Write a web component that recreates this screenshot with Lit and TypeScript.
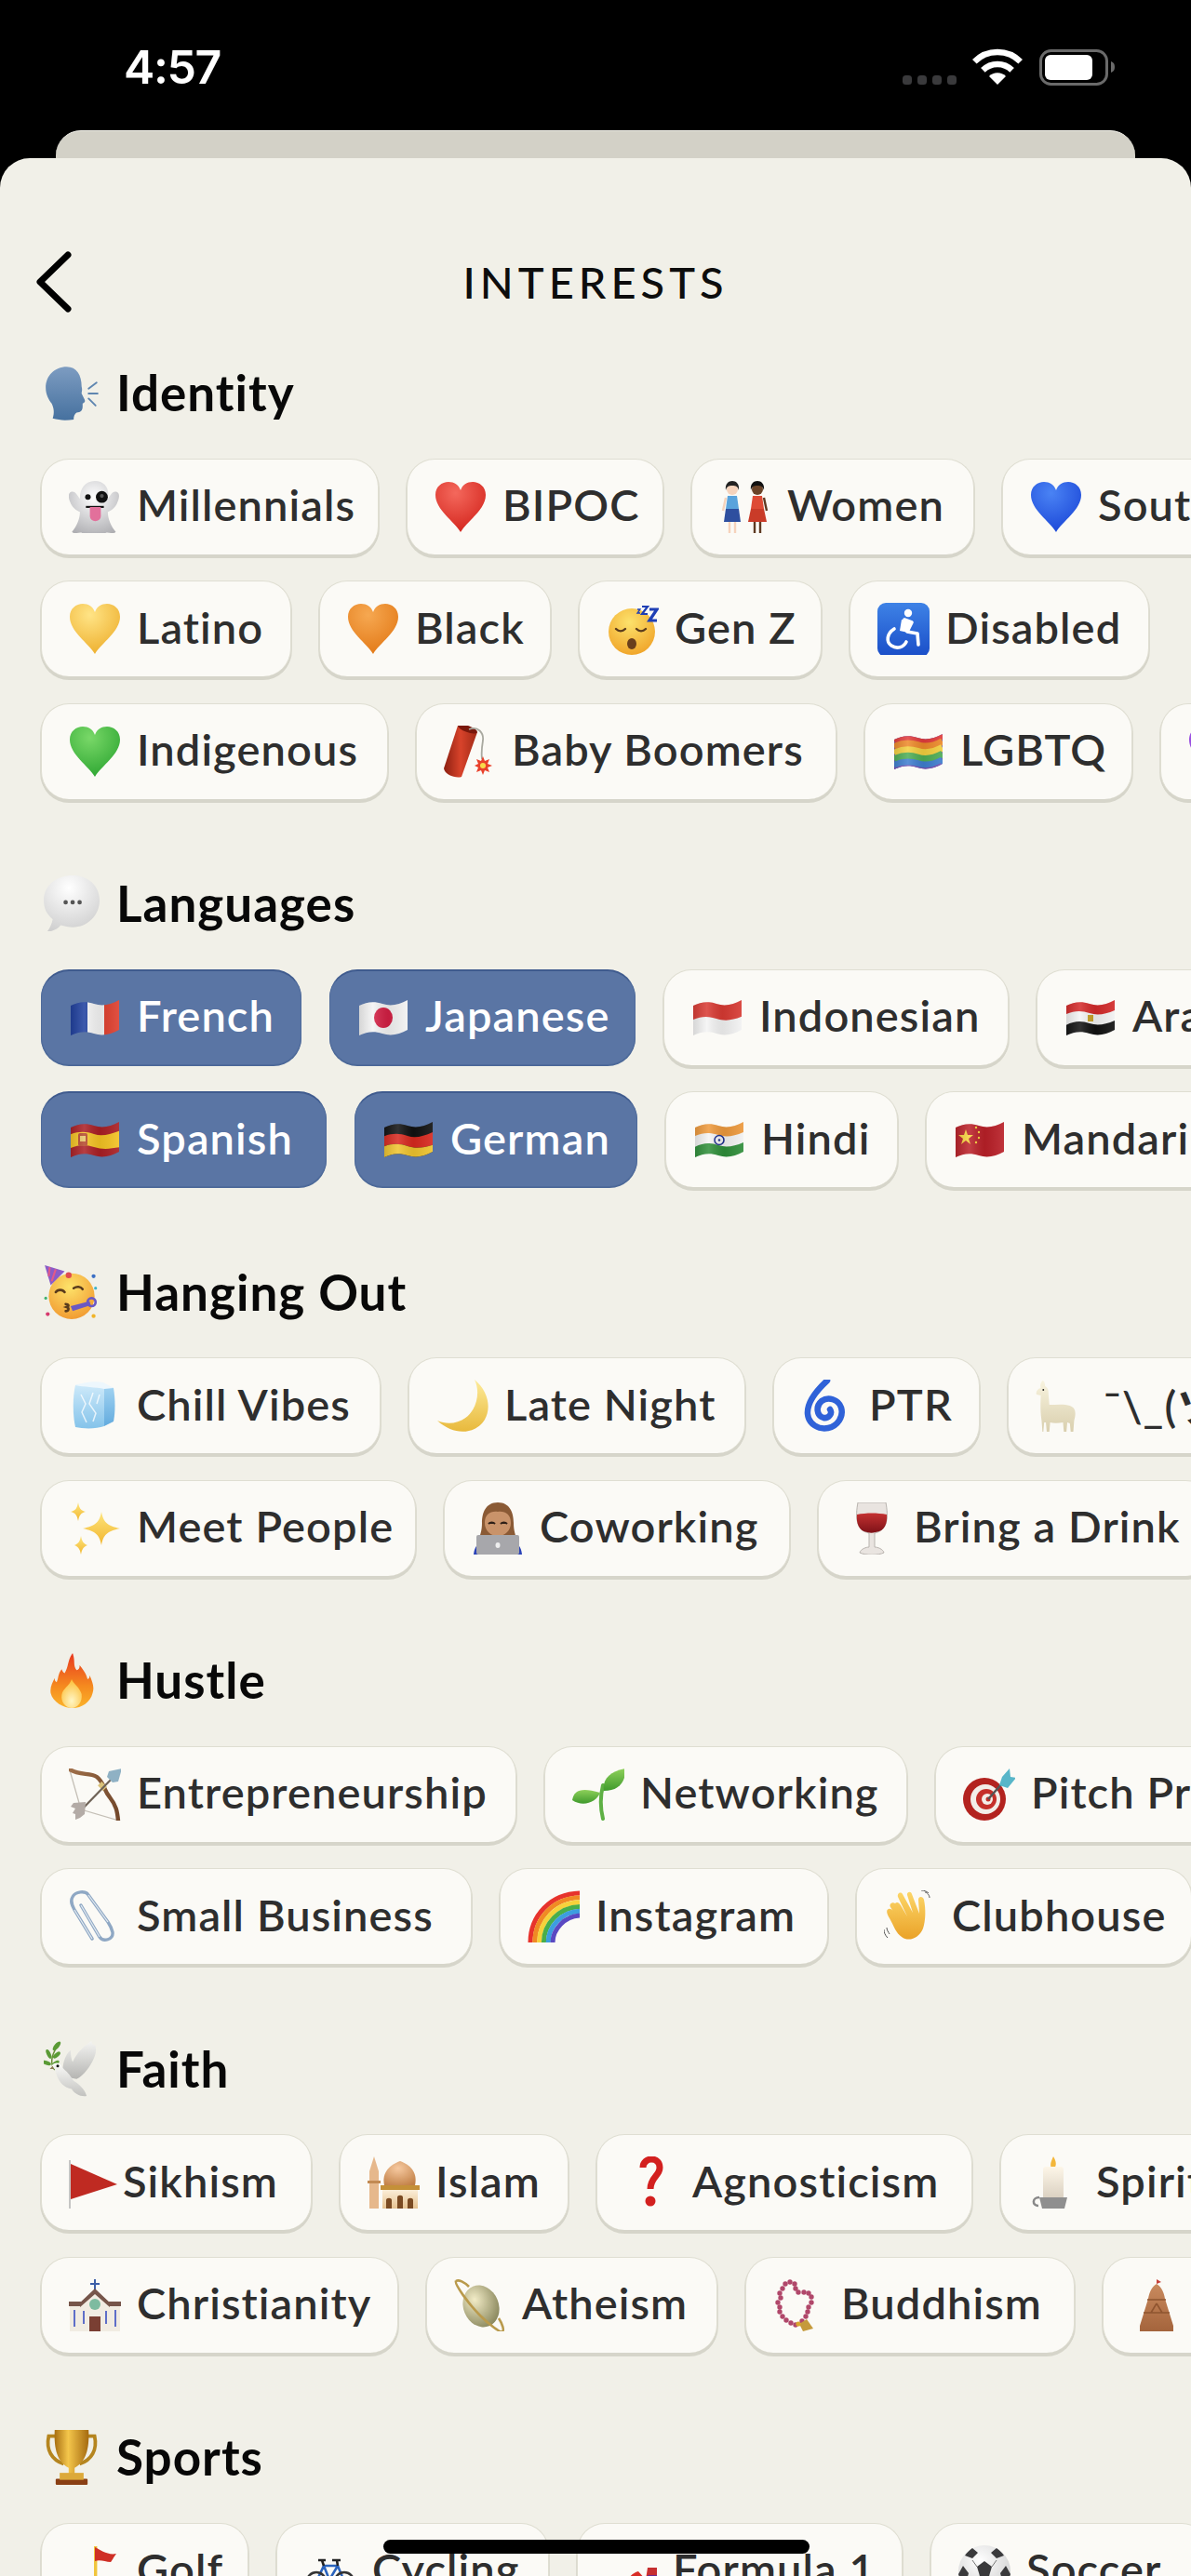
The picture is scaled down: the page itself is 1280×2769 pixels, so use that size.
import { LitElement, html, css, svg } from "lit";
import { customElement } from "lit/decorators.js";

const lin = (id: string, a: string, b: string, h = false) => svg`<linearGradient id=${id} x1="0" y1="0" x2=${h ? 1 : 0} y2=${h ? 0 : 1}><stop offset="0" stop-color=${a}/><stop offset="1" stop-color=${b}/></linearGradient>`;
const rad = (id: string, a: string, b: string, cx = 0.38, cy = 0.3) => svg`<radialGradient id=${id} cx=${cx} cy=${cy} r="0.8"><stop offset="0" stop-color=${a}/><stop offset="1" stop-color=${b}/></radialGradient>`;

const heart = (id: string, a: string, b: string) => svg`<defs>${rad(id, a, b, 0.4, 0.22)}</defs><path fill="url(#${id})" d="M28 55C21 43 1 31 1 15 1 6 8 1 15 1c6 0 11 3 13 9 2-6 7-9 13-9 7 0 14 5 14 14 0 16-20 28-27 40Z"/>`;

const WAVE = "M2 15C10 11 18 10 27 13S45 14 54 9V41C45 46 36 48 27 45S10 43 2 47Z";
const flag = (id: string, body: unknown) => svg`<defs><clipPath id=${id}><path d=${WAVE}/></clipPath><linearGradient id="${id}g" x1="0" y1="0" x2="1" y2="0"><stop offset="0" stop-color="#000" stop-opacity=".14"/><stop offset=".3" stop-color="#fff" stop-opacity=".14"/><stop offset=".6" stop-color="#000" stop-opacity=".08"/><stop offset="1" stop-color="#fff" stop-opacity=".1"/></linearGradient></defs><g clip-path="url(#${id})">${body}<rect x="0" y="0" width="56" height="56" fill="url(#${id}g)"/></g>`;
const hbands = (cols: string[]) => {
  const h = 40 / cols.length;
  return cols.map((c, i) => svg`<path fill="none" stroke=${c} stroke-width=${h + 1} d="M2 ${11 + 2 + h * (i + 0.5)}C10 ${9 + h * (i + 0.5)} 18 ${8 + h * (i + 0.5)} 27 ${11 + h * (i + 0.5)}S45 ${12 + h * (i + 0.5)} 54 ${7 + h * (i + 0.5)}"/>`);
};

const ICONS: Record<string, unknown> = {
  speak: svg`<defs>${lin("sp", "#7d9cc1", "#46719f")}</defs><path fill="url(#sp)" d="M23 2C11 2 2 11 2 23c0 7 3 12 6 16 2 4 3 9 1 15 7 2 14 2 21 1 0-3 1-6 3-7 4 0 6-2 6-6v-3c2-1 3-2 2-4l-3-6c0-2 1-3 0-7C38 10 33 2 23 2Z"/><path stroke="#5f86b0" stroke-width="1.8" fill="none" stroke-linecap="round" d="M45 24l8-6M45 29h9M45 34l7 7"/>`,
  speech: svg`<defs>${rad("sb", "#ffffff", "#cfcfcf", 0.45, 0.22)}</defs><path fill="url(#sb)" d="M29 0C13 0 0 10 0 25c0 8 3 14 9 19-1 5-3 9-6 13 6-1 11-3 14-7 4 1 8 2 12 2 15 0 27-12 27-27S44 0 29 0Z"/><g fill="#555"><circle cx="22" cy="27" r="2.2"/><circle cx="29" cy="27" r="2.2"/><circle cx="36" cy="27" r="2.2"/></g>`,
  party: svg`<defs>${rad("pf", "#fde36a", "#f0932b", 0.45, 0.3)}</defs><circle cx="28" cy="32" r="23" fill="url(#pf)"/><path fill="#8a5cc7" d="M1 1l20 6-14 14Z"/><path stroke="#e05a8a" stroke-width="2" d="M6 3l-1 9M12 5l-4 12"/><circle cx="25" cy="11" r="3" fill="#e04a50"/><g fill="none" stroke="#5a3b1c" stroke-width="2.4" stroke-linecap="round"><path d="M12 28c2-3 7-3 9 0M30 24c3-2 7-2 9 1"/><path d="M22 40c3 0 4 2 1 3 3 1 2 4-1 4"/></g><path fill="#6a58c4" d="M27 42l19-5 1 4-18 6Z"/><circle cx="48" cy="38" r="4" fill="none" stroke="#6a58c4" stroke-width="2.5"/><circle cx="50" cy="12" r="2" fill="#3b6fc4"/><circle cx="52" cy="24" r="1.5" fill="#3fb3c8"/><circle cx="4" cy="50" r="2" fill="#d63a6e"/><circle cx="2" cy="34" r="1.5" fill="#3fb36e"/><circle cx="50" cy="52" r="2" fill="#f0b429"/>`,
  fire: svg`<defs><linearGradient id="fr" x1="0" y1="0" x2="0" y2="1"><stop offset="0" stop-color="#e8391f"/><stop offset=".6" stop-color="#f58a1f"/><stop offset="1" stop-color="#fbb32a"/></linearGradient>${rad("fi", "#fff6c4", "#fcb92b", 0.5, 0.75)}</defs><path fill="url(#fr)" d="M29 1c3 8 0 12 4 17 3-1 3-3 3-5 5 6 7 10 8 14 2-1 2-2 2-4 3 7 5 12 3 18-2 9-11 15-20 15S9 50 7 41c-1-6 2-11 4-15 0 2 0 3 2 4 2-4 1-8 5-13 1 2 1 3 3 4C25 15 24 7 29 1Z"/><path fill="url(#fi)" d="M28 27c2 5 8 8 10 15 1 8-4 14-10 14s-11-6-10-13c1-7 8-9 10-16Z"/>`,
  dove: svg`<defs>${lin("dv", "#fbfbf9", "#c2c2bf")}${lin("dw", "#f4f4f2", "#b5b5b2")}</defs><path stroke="#6c8f3b" stroke-width="1.4" fill="none" d="M11 29C7 24 7 16 13 6"/><g fill="#5a9a35"><ellipse cx="13" cy="5" rx="2.4" ry="5.5" transform="rotate(40 13 5)"/><ellipse cx="5" cy="13" rx="2" ry="5" transform="rotate(-25 5 13)"/><ellipse cx="13" cy="14" rx="2" ry="4.5" transform="rotate(50 13 14)"/><ellipse cx="3" cy="22" rx="2" ry="4.5" transform="rotate(-70 3 22)"/><ellipse cx="12" cy="22" rx="1.8" ry="4" transform="rotate(60 12 22)"/></g><path fill="url(#dw)" d="M19 30C19 20 23 12 27 9c0 6 1 10 2 12C33 12 40 5 48 0c0 3 2 3 4 5 1 5 0 9-2 13-3 7-10 17-17 20-7-1-12-4-14-8Z"/><path fill="url(#dv)" d="M8 25c2-4 8-4 10 0 1 3 5 5 8 9l4 6c5 3 11 8 13 15-6 1-12-2-15-7-7-1-13-7-15-14-1-3-1-6-5-9Z"/><circle cx="14" cy="25" r="1.4" fill="#111"/><path fill="#8a7a55" d="M9 25l-3 3 4 0Z"/>`,
  trophy: svg`<defs><linearGradient id="tr" x1="0" y1="0" x2="1" y2="0"><stop offset="0" stop-color="#a86f12"/><stop offset=".4" stop-color="#f4c64b"/><stop offset="1" stop-color="#a56a10"/></linearGradient></defs><path fill="none" stroke="#b5851f" stroke-width="3.5" d="M13 7H5c-3 14 3 24 15 28M43 7h8c3 14-3 24-15 28"/><path fill="url(#tr)" d="M11 1h34c1 20-3 32-14 38v9h-6v-9C14 33 10 21 11 1Z"/><rect x="12" y="50" width="32" height="6" rx="1" fill="#8a3f14"/><rect x="16" y="44" width="24" height="7" fill="#dca93a"/>`,
  ghost: svg`<defs>${rad("gh", "#ffffff", "#a9a9ad", 0.5, 0.3)}</defs><g transform="translate(-2 -1) scale(1.07)"><path fill="url(#gh)" d="M28 1C18 1 13 9 13 18v1C11 16 8 10 4 12 0 14 2 20 4 24c2 4 6 7 9 8 0 7-3 14-8 20 3 3 7 0 10 1 3 2 6 3 8 1 3-1 5-1 8 0 3 2 6 1 8-1 3-1 7 2 10-1-5-6-8-13-8-20 3-1 7-4 9-8 2-4 4-10 0-12-4-2-7 4-9 7v-1C43 9 38 1 28 1Z"/><circle cx="21" cy="17" r="2.8" fill="#111"/><circle cx="35" cy="17" r="6" fill="#111"/><circle cx="35" cy="16" r="2" fill="#555"/><path stroke="#111" stroke-width="2" d="M19 27h18" fill="none"/><path fill="#e2709b" d="M23 27h11v9c0 7-11 7-11 0Z"/></g>`,
  red: heart("hr", "#f4685c", "#d4261e"),
  blue: heart("hb", "#4a83f4", "#1c48d8"),
  yellow: heart("hy", "#ffe486", "#eeb02f"),
  orange: heart("ho", "#f6a851", "#e37a18"),
  green: heart("hg", "#79d868", "#2fa733"),
  purple: heart("hp", "#b76ef0", "#7a2fd0"),
  women: svg`<circle cx="14" cy="9" r="6" fill="#f6d3bc"/><path fill="#222" d="M7 10C6 3 10 0 14 0s8 3 7 10c-1-4-3-5-7-5s-6 1-7 5Z"/><path fill="#5aa3dc" d="M9 16h10l2 14H7Z"/><path fill="#2e4f9f" d="M7 30h14l2 14H5Z"/><path stroke="#f6d3bc" stroke-width="2.4" d="M7 18l-3 14M11 44v12M17 44v12"/><circle cx="41" cy="9" r="6" fill="#6a4328"/><path fill="#111" d="M34 10C33 3 37 0 41 0s8 3 7 10c-1-4-3-5-7-5s-6 1-7 5Z"/><path fill="#de4b35" d="M36 16h10l2 14-3 14H37l-3-14Z"/><path fill="#c93b28" d="M34 30h14l3 14H31Z"/><path stroke="#5e3a22" stroke-width="2.4" d="M48 18l3 14M38 44v12M44 44v12"/>`,
  sleep: svg`<defs>${rad("sl", "#fce26c", "#ef9e22", 0.45, 0.3)}</defs><circle cx="27" cy="31" r="25" fill="url(#sl)"/><g fill="none" stroke="#5a3b1c" stroke-width="2.4" stroke-linecap="round"><path d="M10 28c3 3 7 3 10 0M32 28c3 3 7 3 10 0"/></g><ellipse cx="27" cy="44" rx="5" ry="6" fill="#6a3f1c"/><g fill="none" stroke="#1f3fb5"><path d="M46 7h8l-8 12h8" stroke-width="3.2"/><path d="M38 4h6l-6 8h6" stroke-width="2.2"/><path d="M33 7h3l-3 4h3" stroke-width="1.3"/></g>`,
  wheel: svg`<defs>${lin("wh", "#3e82e6", "#1a4ec8")}</defs><rect x="0" y="0" width="56" height="58" rx="9" fill="url(#wh)"/><g fill="none" stroke="#fff" stroke-width="3.6" stroke-linecap="round" stroke-linejoin="round"><path d="M29 18l8 3-5 10 11 2 1 12"/><path d="M18 28c-8 5-9 14-3 18 6 4 13 2 16-4"/></g><circle cx="33" cy="11" r="4.2" fill="#fff"/><path fill="#fff" d="M26 18l11 2-4 12-9-2Z"/>`,
  dynamite: svg`<defs><linearGradient id="dy" x1="0" y1="0" x2="1" y2="0"><stop offset="0" stop-color="#8c1f10"/><stop offset=".5" stop-color="#d8432b"/><stop offset="1" stop-color="#a02a16"/></linearGradient></defs><path fill="url(#dy)" d="M15 0l21 7-17 48c-6 2-18-2-19-9Z"/><ellipse cx="25.5" cy="3.5" rx="11" ry="3.5" transform="rotate(20 25.5 3.5)" fill="#7a180c"/><path fill="none" stroke="#a9a9a0" stroke-width="1.8" d="M27 4c10-4 16 4 15 12-1 6-2 12-1 20"/><path fill="#e9412b" d="M42 33l2 5 5-2-2 5 5 2-5 2 2 5-5-2-2 5-2-5-5 2 2-5-4-2 4-2-2-5 5 2Z"/><circle cx="42" cy="43" r="3" fill="#f8d94a"/>`,
  rainbowflag: flag("fr1", svg`<rect width="56" height="56" fill="#6a4fb5"/>${hbands(["#e23c3c", "#ee8a2a", "#f4d03f", "#4fae56", "#3f7fd0", "#7a4fb0"])}`),
  french: flag("f1", svg`<rect x="0" width="20" height="56" fill="#1e3f9e"/><rect x="20" width="18" height="56" fill="#f5f5f5"/><rect x="38" width="18" height="56" fill="#e0402f"/>`),
  japan: flag("f2", svg`<rect width="56" height="56" fill="#f4f4f4"/><ellipse cx="28" cy="28" rx="10" ry="11" fill="#d41f44"/>`),
  indonesia: flag("f3", svg`<rect width="56" height="56" fill="#f4f4f4"/><path fill="#d93a33" d="M0 0H56V26C45 31 36 32 27 29S10 26 0 31Z"/>`),
  egypt: flag("f4", svg`<rect width="56" height="56" fill="#f4f4f4"/><path fill="#d42a2a" d="M0 0H56V19C45 24 36 26 27 23S10 20 0 25Z"/><path fill="#111" d="M0 37C10 31 18 31 27 34S45 35 56 30V56H0Z"/><rect x="25" y="25" width="6" height="7" fill="#c9a227"/>`),
  spain: flag("f5", svg`<rect width="56" height="56" fill="#ab1f24"/><path fill="#f5c423" d="M0 23C10 19 18 19 27 22S45 22 56 18V36C45 38 36 39 27 36S10 33 0 38Z"/><rect x="10" y="21" width="10" height="14" rx="2" fill="#b5472c"/><rect x="12" y="24" width="6" height="6" fill="#e8c56a"/>`),
  germany: flag("f6", svg`<rect width="56" height="56" fill="#111"/><path fill="#d9291f" d="M0 25C10 21 18 21 27 24S45 24 56 19V33C45 37 36 38 27 35S10 32 0 36Z"/><path fill="#f0c52e" d="M0 36C10 32 18 32 27 35S45 37 56 33V56H0Z"/>`),
  india: flag("f7", svg`<rect width="56" height="56" fill="#f4f4f4"/><path fill="#ef9a3c" d="M0 0H56V19C45 24 36 26 27 23S10 20 0 25Z"/><path fill="#2f8f3a" d="M0 37C10 31 18 31 27 34S45 35 56 30V56H0Z"/><circle cx="28" cy="28.5" r="5" fill="none" stroke="#1c2f8f" stroke-width="1.6"/><circle cx="28" cy="28.5" r="1.2" fill="#1c2f8f"/>`),
  china: flag("f8", svg`<rect width="56" height="56" fill="#bb2028"/><path fill="#f6d23c" d="M13 17l2 6 6 0-5 4 2 6-5-4-5 4 2-6-5-4 6 0Z"/><g fill="#f6d23c"><circle cx="24" cy="15" r="1.2"/><circle cx="27" cy="20" r="1.2"/><circle cx="27" cy="26" r="1.2"/><circle cx="24" cy="31" r="1.2"/></g>`),
  ice: svg`<defs>${lin("ic", "#cfeafa", "#84c3ea")}${lin("ic2", "#a3d4f2", "#63abde")}</defs><path fill="url(#ic)" d="M7 6C15 4 28 4 38 6v44c-8 3-22 3-31 1C4 38 4 18 7 6Z"/><path fill="url(#ic2)" d="M38 6l10 3c2 12 2 26 0 36l-10 5Z"/><path fill="#edf7fd" d="M7 6c8-3 21-5 30-3l11 6-10 1C29 8 16 8 7 6Z"/><path stroke="#fff" stroke-width="1.5" stroke-opacity=".75" fill="none" d="M13 16l5 10-4 9 5 11M26 14l-4 12 7 10-3 9M33 16l-3 10"/>`,
  moon: svg`<defs>${lin("mo", "#fdeb9a", "#e8b93c")}</defs><path fill="url(#mo)" d="M41 0C58 14 60 36 48 48 38 58 18 60 1 44c13 6 29 2 37-10 7-10 8-24 3-34Z"/>`,
  spiral: svg`<path fill="none" stroke="#2f62d8" stroke-width="6.5" stroke-linecap="round" d="M28 1C14 14 6 26 7 37c1 11 12 17 22 15s17-12 14-22c-3-9-14-12-21-7-7 6-5 16 2 18 6 1 10-5 7-9"/>`,
  llama: svg`<defs>${lin("ll", "#f8f3de", "#d9cfae")}</defs><g transform="scale(.92 1)"><path fill="url(#ll)" d="M8 1c2 0 3 3 3 6 4 2 4 5 4 8l1 12c8 0 18-1 24 1 6 2 7 6 6 12l-1 4-1 12h-3l-1-9-3-1-1 10h-3l-1-10c-6 1-11 1-15 0l-1 10h-3l-1-10-2 0-1 10H8l-1-12C5 32 6 24 6 17l-5-1c-1-3 1-6 5-7C5 6 6 3 8 1Z"/><circle cx="9" cy="11" r="1" fill="#222"/></g>`,
  sparkle: svg`<defs>${lin("sk", "#fde57e", "#f2b62e")}</defs><g fill="url(#sk)"><path d="M35 10c2 11 6 15 20 18-14 3-18 7-20 18-2-11-6-15-20-18 14-3 18-7 20-18Z"/><path d="M10 0c1 6 3 9 8 10-5 1-7 4-8 10-1-6-3-9-8-10 5-1 7-4 8-10Z"/><path d="M13 36c1 5 2 8 7 10-5 2-6 5-7 10-1-5-2-8-7-10 5-2 6-5 7-10Z"/></g>`,
  coder: svg`<path fill="#8a5a35" d="M28 0C15 0 11 11 11 22c0 8-2 14-4 18h42c-2-4-4-10-4-18C45 11 41 0 28 0Z"/><path fill="#c9936a" d="M14 22c0-9 6-13 14-12 8-1 14 3 14 12 0 8-6 14-14 14S14 30 14 22Z"/><path fill="#2f2018" d="M18 23c2-2 5-2 7 0M31 23c2-2 5-2 7 0" stroke="#2f2018" stroke-width="2"/><path fill="#2b43b8" d="M2 56c1-10 6-16 26-16s25 6 26 16Z"/><rect x="5" y="35" width="46" height="21" rx="2" fill="#a7a7ab"/><ellipse cx="28" cy="46" rx="2.5" ry="3" fill="#eee"/>`,
  wine: svg`<defs>${lin("wn", "#c43131", "#7e1218")}</defs><path fill="#e9e4e0" stroke="#b8b3ae" stroke-width="1" d="M13 0h30c3 16 2 30-12 33v15c3 0 9 2 10 6-6 3-20 3-26 0 1-4 7-6 10-6V33C11 30 10 16 13 0Z"/><path fill="url(#wn)" d="M12 13c10-2 22-2 32 0 1 9-2 18-12 19-3 1-6 1-9 0-9-1-12-10-11-19Z"/>`,
  bow: svg`<defs>${lin("bw", "#a0704a", "#74492c", true)}</defs><path stroke="#c4bfb6" stroke-width="1.3" d="M1 2L13 44 54 56" fill="none"/><path fill="none" stroke="url(#bw)" stroke-width="4.4" stroke-linecap="round" d="M1 1C12 8 22 4 30 9c8 6 7 14 14 22 7 9 8 15 9 25"/><rect x="33" y="15" width="6" height="8" fill="#d9c27a" transform="rotate(-45 36 19)"/><path stroke="#6e6256" stroke-width="2.2" d="M49 8L12 46" fill="none"/><path fill="#8fb1c4" d="M57 0L43 3l-2 6 6 6 6-1Z"/><path fill="#b3aba6" d="M18 36l-13 1-3 4 5 2-3 5 3 1 0 6 5-2 5-4 1-13Z"/>`,
  seedling: svg`<defs>${lin("se", "#8ed05a", "#3f9a2c")}</defs><path stroke="#5eb044" stroke-width="4" fill="none" stroke-linecap="round" d="M33 54C30 42 30 30 33 18"/><path fill="url(#se)" d="M57 0C58 14 50 24 34 24 32 12 40 3 57 0Z"/><path fill="url(#se)" d="M0 34C2 23 10 20 30 26 26 36 12 42 0 34Z"/>`,
  dart: svg`<circle cx="23" cy="33" r="23" fill="#b3231f"/><circle cx="24" cy="33" r="16" fill="#f3eee8"/><circle cx="25" cy="33" r="11" fill="#c5302a"/><circle cx="26" cy="33" r="6" fill="#f3eee8"/><circle cx="27" cy="33" r="2.5" fill="#c5302a"/><path stroke="#555" stroke-width="2.5" d="M27 33L42 16"/><path fill="#58b6c9" d="M50 0l1 9 6 1-9 11-9-3 3-9Z"/>`,
  clip: svg`<path fill="none" stroke="#8fa8c4" stroke-width="3.4" stroke-linecap="round" d="M13 16L33 50c4 6 15 3 14-5-1-4-3-8-5-11L21 5C18 0 7 1 4 7c-3 5 0 10 2 14l19 31"/><path fill="none" stroke="#e5ecf3" stroke-width="1.2" d="M13 16L33 50M21 5L42 34M6 21l19 31"/>`,
  rainbow: svg`${["#e7332c", "#f08a24", "#f6d23b", "#49ae4a", "#3c9ee0", "#5a49c2"].map((c, i) => svg`<path fill="none" stroke=${c} stroke-width="5" d="M${3 + i * 4.8} 56C${3 + i * 4.8} ${28 + i * 3} ${24 + i * 3} ${3 + i * 4.8} 58 ${3 + i * 4.8}"/>`)}`,
  wave: svg`<defs>${lin("wv", "#fcd668", "#eaa228")}</defs><path fill="url(#wv)" d="M12 14c2-2 4-1 6 2l7 12L15 7c-1-4 3-6 5-3l11 20-6-19c-1-3 4-5 5-1l8 21-1-15c0-4 5-4 6 0 2 10 2 22-1 31-4 10-15 15-23 9-6-4-8-11-13-20-3-5-4-9-1-10 3-1 5 2 9 9L7 18c-2-3 2-6 5-4Z"/><path stroke="#555" stroke-width="1" fill="none" d="M3 40c0 3 2 5 3 7M0 42c0 3 1 6 4 9M44 2c2 0 5 3 5 6M40 0c3 0 6 1 8 3"/>`,
  pennant: svg`<path stroke="#b8b8b8" stroke-width="1.6" d="M1 4V56"/><path fill="#bf2a22" d="M2 8L52 30 2 46Z"/>`,
  mosque: svg`<defs>${rad("mq", "#f6c9a0", "#c17f45", 0.45, 0.3)}${lin("mw", "#fbeed8", "#e6c291")}</defs><path fill="#e6b88c" d="M2 16L7 0l5 16v40H2Z"/><rect x="0" y="26" width="14" height="3" fill="#c28a53"/><path fill="url(#mq)" d="M35 5c11 4 19 12 16 26H18C15 17 24 9 35 5Z"/><rect x="14" y="31" width="42" height="5" fill="#c49038"/><rect x="16" y="36" width="38" height="20" fill="url(#mw)"/><g fill="#7a4a22"><path d="M20 56V47c0-3 6-3 6 0v9Z"/><path d="M32 56V44c0-3 6-3 6 0v12Z"/><path d="M43 56V47c0-3 6-3 6 0v9Z"/></g>`,
  question: svg`<path fill="none" stroke="#d3201f" stroke-width="7" d="M20 12c0-6 5-9 9-9 6 0 9 4 9 9 0 9-10 10-10 23"/><circle cx="28" cy="48" r="5.5" fill="#d3201f"/>`,
  candle: svg`<defs>${lin("cd", "#fdf6e8", "#d9cfc0")}</defs><path fill="#f3b63a" d="M27 0c3 5 4 9 1 13h-3c-2-5 0-8 2-13Z"/><rect x="16" y="11" width="22" height="35" rx="3" fill="url(#cd)"/><path fill="#8f8f8f" d="M12 44h30l-3 12H15Z"/><path fill="none" stroke="#888" stroke-width="2.5" d="M12 44c-8 0-8 9-1 9"/>`,
  church: svg`<path stroke="#3d5fa8" stroke-width="2" d="M28 0V15M23 5h10"/><path fill="#f1ece2" d="M12 26L28 12l16 14v30H12Z"/><path fill="#76554a" d="M28 10L9 28l3 2 16-14 16 14 3-2Z"/><rect x="1" y="28" width="11" height="28" fill="#f1ece2"/><rect x="44" y="28" width="11" height="28" fill="#f1ece2"/><rect x="0" y="24" width="13" height="5" fill="#76554a"/><rect x="43" y="24" width="13" height="5" fill="#76554a"/><circle cx="28" cy="27" r="6" fill="#7dbba0"/><rect x="22" y="40" width="12" height="16" fill="#7a3f33"/><path stroke="#5e6ec8" stroke-width="2" d="M6 33v18M50 33v18M16 34v14M40 34v14"/>`,
  planet: svg`<defs>${rad("pl", "#f2ecc7", "#7f7d52", 0.4, 0.3)}</defs><ellipse cx="29" cy="29" rx="19" ry="23" transform="rotate(-22 29 29)" fill="url(#pl)"/><path fill="none" stroke="#b99a4c" stroke-width="2.6" d="M2 2c-2 3 14 25 26 37 10 10 22 19 24 17 2-1 0-8-4-14M2 2c3-2 9 1 14 6"/>`,
  beads: svg`<g fill="#b0476a">${[[7,30],[5,25],[8,20],[7,15],[10,10],[13,5],[18,3],[23,5],[24,10],[27,14],[33,14],[38,15],[41,19],[41,25],[38,30],[37,35],[35,40],[31,45],[7,35],[10,40],[14,44],[19,47],[24,49]].map(([x,y])=>svg`<circle cx=${x} cy=${y} r="2.7"/>`)}</g><path fill="#c59a3c" d="M28 48l8-5 7 10-11 3Z"/><circle cx="27" cy="48" r="2.6" fill="#d9a62e"/>`,
  temple: svg`<defs>${lin("tm", "#c98a5e", "#a4643c")}</defs><path fill="#c8423a" d="M28 0l5 3-5 2Z"/><path fill="url(#tm)" d="M28 5c5 3 8 9 9 16l9 29v6H10v-6l9-29c1-7 4-13 9-16Z"/><path stroke="#8f5530" fill="none" stroke-width="1.6" d="M18 22h20M14 36h28M28 26l-6 10M28 26l6 10"/>`,
  golf: svg`<rect x="27" y="1" width="3.4" height="55" fill="#f0c53d"/><path fill="#cf2f26" d="M28 2c6 3 14 9 23 7-3 4-5 8-6 9-6 0-11-3-17-1Z"/>`,
  bike: svg`<g fill="none" stroke="#2a63bd" stroke-width="2.6"><path d="M13 39L21 22H36L43 39M21 22L27 37 36 22M13 39H27"/><path stroke="#222" d="M15 16h8M30 16h9M21 22L19 16M36 22L35 16"/></g><circle cx="13" cy="39" r="10" fill="none" stroke="#333" stroke-width="2.6"/><circle cx="43" cy="39" r="10" fill="none" stroke="#333" stroke-width="2.6"/>`,
  car: svg`<path fill="#d92d27" d="M18 44c6-6 10-14 18-16l8 9 2-13h10v30H18Z"/><rect x="46" y="24" width="10" height="8" fill="#c62f30"/><rect x="46" y="32" width="10" height="4" fill="#6a2b8f"/>`,
  ball: svg`<defs>${rad("bl", "#ffffff", "#c9c9c9", 0.42, 0.3)}</defs><circle cx="28" cy="28" r="28" fill="url(#bl)"/><path fill="#3a3a3c" d="M20 23l8-6 8 6-3 10H23Z"/><path fill="#3a3a3c" d="M15 3L21 8 15 14 7 11C9 8 12 5 15 3ZM41 3l-6 5 6 6 8-3C47 8 44 5 41 3ZM0 31l5-9 6 8-3 11C4 39 1 35 0 31ZM56 31l-5-9-6 8 3 11c4-2 7-6 8-10ZM20 55l2-9h12l2 9c-5 2-11 2-16 0Z"/><path stroke="#777" stroke-width="1" fill="none" d="M20 23l-5-7M36 23l5-7M23 33l-9 6M33 33l9 6M23 33l-1 13M33 33l1 13"/>`,
};

type Chip = { t: string; i: string; w: number; on?: boolean; tight?: boolean };
type Section = { title: string; icon: string; rows: Chip[][] };

const DATA: Section[] = [
  { title: "Identity", icon: "speak", rows: [
    [{ t: "Millennials", i: "ghost", w: 363 }, { t: "BIPOC", i: "red", w: 276 }, { t: "Women", i: "women", w: 304 }, { t: "South Asian", i: "blue", w: 360 }],
    [{ t: "Latino", i: "yellow", w: 269 }, { t: "Black", i: "orange", w: 249 }, { t: "Gen Z", i: "sleep", w: 261 }, { t: "Disabled", i: "wheel", w: 322 }],
    [{ t: "Indigenous", i: "green", w: 373 }, { t: "Baby Boomers", i: "dynamite", w: 452 }, { t: "LGBTQ", i: "rainbowflag", w: 288 }, { t: "Asian", i: "purple", w: 260 }],
  ] },
  { title: "Languages", icon: "speech", rows: [
    [{ t: "French", i: "french", w: 280, on: true }, { t: "Japanese", i: "japan", w: 329, on: true }, { t: "Indonesian", i: "indonesia", w: 371 }, { t: "Arabic", i: "egypt", w: 280 }],
    [{ t: "Spanish", i: "spain", w: 307, on: true }, { t: "German", i: "germany", w: 304, on: true }, { t: "Hindi", i: "india", w: 250 }, { t: "Mandarin", i: "china", w: 340 }],
  ] },
  { title: "Hanging Out", icon: "party", rows: [
    [{ t: "Chill Vibes", i: "ice", w: 365 }, { t: "Late Night", i: "moon", w: 362 }, { t: "PTR", i: "spiral", w: 222 }, { t: "¯\\_(ツ)_/¯", i: "llama", w: 320 }],
    [{ t: "Meet People", i: "sparkle", w: 403 }, { t: "Coworking", i: "coder", w: 372 }, { t: "Bring a Drink", i: "wine", w: 425 }],
  ] },
  { title: "Hustle", icon: "fire", rows: [
    [{ t: "Entrepreneurship", i: "bow", w: 511 }, { t: "Networking", i: "seedling", w: 390 }, { t: "Pitch Practice", i: "dart", w: 430 }],
    [{ t: "Small Business", i: "clip", w: 463 }, { t: "Instagram", i: "rainbow", w: 353 }, { t: "Clubhouse", i: "wave", w: 361 }],
  ] },
  { title: "Faith", icon: "dove", rows: [
    [{ t: "Sikhism", i: "pennant", w: 291, tight: true }, { t: "Islam", i: "mosque", w: 246 }, { t: "Agnosticism", i: "question", w: 404 }, { t: "Spirituality", i: "candle", w: 360 }],
    [{ t: "Christianity", i: "church", w: 384 }, { t: "Atheism", i: "planet", w: 313 }, { t: "Buddhism", i: "beads", w: 354 }, { t: "Hinduism", i: "temple", w: 340 }],
  ] },
  { title: "Sports", icon: "trophy", rows: [
    [{ t: "Golf", i: "golf", w: 223 }, { t: "Cycling", i: "bike", w: 293 }, { t: "Formula 1", i: "car", w: 350 }, { t: "Soccer", i: "ball", w: 300 }],
  ] },
];

@customElement("app-root")
export class AppRoot extends LitElement {
  static styles = css`
    :host { display: block; position: relative; width: 1280px; height: 2769px; overflow: hidden; background: #000; font-family: "Lato", "Noto Sans CJK JP", sans-serif; }
    .status { height: 140px; display: flex; justify-content: space-between; padding: 0 75px 0 133px; box-sizing: border-box; }
    .time { color: #fff; font: 600 50px/1 "Inter", sans-serif; letter-spacing: -1.4px; padding-top: 47px; }
    .sysicons { width: 245px; height: 55px; margin-top: 45px; }
    .peek { height: 30px; margin: 0 60px; box-sizing: border-box; background: #d3d1c7; border-radius: 27px 27px 0 0; border-top: 1px solid #f2f1ea; }
    .sheet { background: #f1f0e8; border-radius: 32px 32px 0 0; height: 2599px; }
    .nav { height: 222px; display: grid; grid-template-columns: 1fr auto 1fr; align-items: start; padding-top: 100px; box-sizing: border-box; }
    .back { width: 80px; height: 66px; margin-left: 36px; display: block; }
    .title { font-size: 47px; font-weight: 500; letter-spacing: 5px; color: #0d0d0d; line-height: 66px; }
    .section { padding-left: 44px; margin-bottom: 82.5px; }
    .head { display: flex; align-items: center; height: 60px; margin-bottom: 40.5px; padding-left: 3px; }
    .head svg { width: 60px; height: 60px; flex: none; margin-right: 18px; }
    .head span { font-size: 53px; font-weight: 700; letter-spacing: 1px; color: #080808; line-height: 60px; }
    .rows { display: flex; flex-direction: column; gap: 28.5px; }
    .row { display: flex; gap: 30px; }
    .chip { flex: none; box-sizing: border-box; height: 103px; background: #fbfaf6; border: 1.5px solid #dfded2; border-bottom: none; border-radius: 30px; box-shadow: 0 4px 0 #d6d5ca, 1px 2px 0 #dcdbd0, -1px 2px 0 #dcdbd0; display: flex; align-items: center; padding: 0 0 5px 29px; color: #2e2e2e; white-space: nowrap; }
    .chip svg { width: 56px; height: 56px; flex: none; margin-right: 17px; margin-top: 5px; }
    .chip.tight svg { margin-right: 2px; }
    .chip span { font-size: 47px; font-weight: 600; letter-spacing: 1.1px; }
    .chip.on { background: #5a75a4; color: #fff; border: 1px solid #4f6b9b; border-top: 2.5px solid #3f5b8e; box-shadow: 0 1px 0 #4a6797; }
    .home { position: absolute; left: 412px; top: 2730px; width: 458px; height: 15px; border-radius: 8px; background: #000; }
  `;

  private ico(n: string) {
    return html`<svg viewBox="0 0 56 56" aria-hidden="true">${ICONS[n]}</svg>`;
  }

  render() {
    return html`
      <div class="status">
        <div class="time">4:57</div>
        <svg class="sysicons" viewBox="0 0 245 55" aria-hidden="true">
          <g fill="#3a3a3c">
            <rect x="10" y="36" width="10" height="10" rx="3.5"/><rect x="26" y="36" width="10" height="10" rx="3.5"/><rect x="42" y="36" width="10" height="10" rx="3.5"/><rect x="58" y="36" width="10" height="10" rx="3.5"/>
          </g>
          <g fill="none" stroke="#fff" stroke-width="6.5">
            <path d="M87.3 21.3A35 35 0 0 1 136.7 21.3"/>
            <path d="M96.4 30.4A22 22 0 0 1 127.6 30.4"/>
          </g>
          <path fill="#fff" d="M112 46L103 37A12.7 12.7 0 0 1 121 37Z"/>
          <rect x="158.5" y="9.5" width="71" height="36" rx="11" fill="none" stroke="#6a6a6a" stroke-width="3"/>
          <rect x="163" y="14" width="51" height="27" rx="6" fill="#fff"/>
          <path fill="#6a6a6a" d="M234 21c3 1 4 3 4 6s-1 5-4 6Z"/>
        </svg>
      </div>
      <div class="peek"></div>
      <div class="sheet">
        <div class="nav">
          <svg class="back" viewBox="0 0 80 66" aria-hidden="true"><path d="M37 4L7 33l30 29" fill="none" stroke="#000" stroke-width="7" stroke-linecap="round" stroke-linejoin="round" /></svg>
          <div class="title">INTERESTS</div>
          <div></div>
        </div>
        ${DATA.map(s => html`
          <section class="section">
            <div class="head">${this.ico(s.icon)}<span>${s.title}</span></div>
            <div class="rows">
              ${s.rows.map(r => html`<div class="row">
                ${r.map(c => html`<div class="chip ${c.on ? "on" : ""} ${c.tight ? "tight" : ""}" style="width:${c.w}px">${this.ico(c.i)}<span>${c.t}</span></div>`)}
              </div>`)}
            </div>
          </section>`)}
      </div>
      <div class="home"></div>
    `;
  }
}
